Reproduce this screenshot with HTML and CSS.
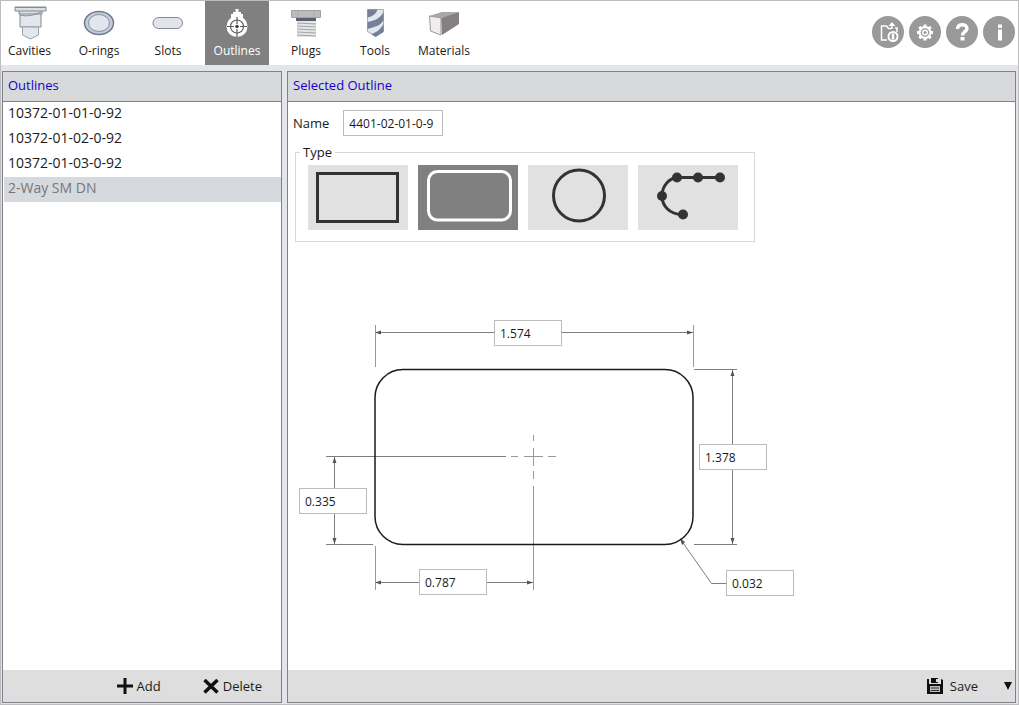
FILE: index.html
```
<!DOCTYPE html>
<html lang="en">
<head>
<meta charset="utf-8">
<title>Outlines</title>
<link rel="stylesheet" href="styles.css">
</head>
<body>
<div class="app">
  <header class="toolbar">
    <nav class="tabs" aria-label="Libraries">
      <button class="tab tab-first" type="button">
        <svg class="tab-icon" viewBox="0 0 36 36" aria-hidden="true"><path d="M8 7h21v15H8z" fill="#e3e7ec" stroke="#858a94"/><path d="M10.500 22h16v8l-8 4-8-4z" fill="#e3e7ec" stroke="#9a9fa8"/><path d="M3 2h31v4h-4v3H7V6H3z" fill="#dcdfe3" stroke="#858a94"/><path d="M3 2.500h31M7 6h23M8 10c7 2 14 0 21-3" fill="none" stroke="#858a94"/></svg>
        <span>Cavities</span>
      </button>
      <button class="tab" type="button">
        <svg class="tab-icon" viewBox="0 0 36 36" aria-hidden="true"><ellipse cx="18" cy="18" rx="14.500" ry="11.500" fill="#c3ccd8" stroke="#717b8b" stroke-width="1.500"/><ellipse cx="18" cy="18" rx="10.500" ry="8.500" fill="#e1e6ee" stroke="#8791a0"/></svg>
        <span>O-rings</span>
      </button>
      <button class="tab" type="button">
        <svg class="tab-icon" viewBox="0 0 36 36" aria-hidden="true"><rect x="3" y="12.500" width="29.500" height="11" rx="5.500" fill="#e1e4e9" stroke="#858a94"/></svg>
        <span>Slots</span>
      </button>
      <button class="tab tab-active" type="button" aria-current="page">
        <svg class="tab-icon" viewBox="0 0 36 36" aria-hidden="true"><path d="M14 11V7h2.500V4h3v3H22v4z" fill="#fff"/><path d="M12 9h12v5H12z" fill="#fff"/><circle cx="18" cy="21.500" r="10.500" fill="#fff"/><g fill="none" stroke="#5c5c5c" stroke-width="1.200"><circle cx="18" cy="21.500" r="6.500"/><path d="M18 12v7M18 24v8M8 21.500h7M21 21.500h7"/></g><circle cx="18" cy="21.500" r="1.800" fill="#444"/></svg>
        <span>Outlines</span>
      </button>
      <button class="tab" type="button">
        <svg class="tab-icon" viewBox="0 0 36 36" aria-hidden="true"><path d="M3.500 5.500h29v7h-29z" fill="#bcbcbe" stroke="#a2a2a5"/><path d="M10 6v6M26 6v6" stroke="#aaa"/><path d="M8 13h20v3H8z" fill="#59616e"/><path d="M9 16h19v16H9z" fill="#e6e6e8"/><path d="M9 18l19 1M9 21l19 1M9 24l19 1M9 27l19 1M9 30l19 1" stroke="#a3a5aa"/></svg>
        <span>Plugs</span>
      </button>
      <button class="tab" type="button">
        <svg class="tab-icon" viewBox="0 0 36 36" aria-hidden="true"><path d="M10.500 4.500h16v22l-8 5-8-5z" fill="#e1e7f0" stroke="#a3adba"/><path d="M10.500 4.500h10c-1 4-5 7-10 8zM26.500 7v8c-3 6-9 7-16 9v-7c7-1 13-4 16-10zM26.500 19v8l-8 5-4-3c6-2 9-5 12-10z" fill="#738095"/></svg>
        <span>Tools</span>
      </button>
      <button class="tab" type="button">
        <svg class="tab-icon" viewBox="0 0 36 36" aria-hidden="true"><path d="M3 11l13-4h17l-17 6z" fill="#aaa8a7"/><path d="M15 13l18-6v12L16 30z" fill="#858180"/><path d="M3.500 11l11.500 2v17L4.500 26z" fill="#eeeeef" stroke="#9a9897"/></svg>
        <span>Materials</span>
      </button>
    </nav>
    <div class="actions">
      <button class="round" type="button" aria-label="Export information"><svg viewBox="0 0 32 32" aria-hidden="true"><path d="M15 24H9.500V10h5l2 2.500h3M23 12h2v4" fill="none" stroke="#fff" stroke-width="1.500"/><path d="M20 6l3.500 4h-7z" fill="#fff"/><path d="M20 9v4" stroke="#fff" stroke-width="1.500"/><circle cx="21" cy="20.500" r="4.500" fill="#999" stroke="#fff" stroke-width="2"/><path d="M21 17.500v6" stroke="#fff" stroke-width="2.500"/></svg></button>
      <button class="round" type="button" aria-label="Settings"><svg viewBox="0 0 32 32" aria-hidden="true"><circle cx="16" cy="16.500" r="5.400" fill="none" stroke="#fff" stroke-width="2.200"/><circle cx="16" cy="16.500" r="2.300" fill="none" stroke="#fff" stroke-width="1.500"/><path d="M16 8.500v3M16 21.500v3M8 16.500h3M21 16.500h3M10.300 10.800l2.200 2.200M19.500 20l2.200 2.200M10.300 22.200l2.200-2.200M19.500 13l2.200-2.200" stroke="#fff" stroke-width="3"/></svg></button>
      <button class="round" type="button" aria-label="Help"><svg viewBox="0 0 32 32" aria-hidden="true"><path d="M11.500 13c0-6 9.500-5.500 9.500-.5 0 3-4.500 3.500-4.500 7" fill="none" stroke="#fff" stroke-width="3.500"/><path d="M14.500 21h4v3.500h-4z" fill="#fff"/></svg></button>
      <button class="round" type="button" aria-label="About"><svg viewBox="0 0 32 32" aria-hidden="true"><path d="M15 8.500h4V12h-4zM15 13.500h4v11h-4z" fill="#fff"/></svg></button>
    </div>
  </header>

  <main class="panels">
    <section class="panel panel-list">
      <h2 class="panel-title">Outlines</h2>
      <ul class="list">
        <li><button class="item" type="button">10372-01-01-0-92</button></li>
        <li><button class="item" type="button">10372-01-02-0-92</button></li>
        <li><button class="item" type="button">10372-01-03-0-92</button></li>
        <li><button class="item item-selected" type="button" aria-current="true">2-Way SM DN</button></li>
      </ul>
      <footer class="panel-footer list-footer">
        <button class="command" type="button"><svg class="command-icon" viewBox="0 0 16 16" aria-hidden="true"><path d="M8 0v16M0 8h16" stroke="#111" stroke-width="3"/></svg>Add</button>
        <button class="command" type="button"><svg class="command-icon" viewBox="0 0 16 16" aria-hidden="true"><path d="M1.500 2l13 12.500M14.500 2l-13 12.500" stroke="#111" stroke-width="3.500"/></svg>Delete</button>
      </footer>
    </section>

    <section class="panel panel-detail">
      <h2 class="panel-title">Selected Outline</h2>
      <form class="detail">
        <div class="name-row">
          <label for="name">Name</label>
          <input class="box name-box" id="name" type="text" value="4401-02-01-0-9">
        </div>
        <fieldset class="types">
          <legend>Type</legend>
          <label class="type"><input type="radio" name="type" aria-label="Rectangle"><svg viewBox="0 0 100 65" aria-hidden="true"><rect x="9.500" y="8.500" width="80" height="48" fill="none" stroke="currentColor" stroke-width="3"/></svg></label>
          <label class="type"><input type="radio" name="type" aria-label="Rounded rectangle" checked><svg viewBox="0 0 100 65" aria-hidden="true"><rect x="10.500" y="6.500" width="82" height="48.500" rx="9" fill="none" stroke="currentColor" stroke-width="3"/></svg></label>
          <label class="type"><input type="radio" name="type" aria-label="Circle"><svg viewBox="0 0 100 65" aria-hidden="true"><circle cx="51" cy="30.500" r="25.500" fill="none" stroke="currentColor" stroke-width="3"/></svg></label>
          <label class="type"><input type="radio" name="type" aria-label="Free form"><svg viewBox="0 0 100 65" aria-hidden="true"><path d="M82 12.500H40C30 13 24 22 24 31s7 19 21 18.500" fill="none" stroke="currentColor" stroke-width="3"/><g fill="currentColor"><circle cx="39" cy="12.500" r="5"/><circle cx="60" cy="12.500" r="5"/><circle cx="82" cy="12.500" r="5"/><circle cx="24" cy="31" r="5"/><circle cx="45" cy="49.500" r="5"/></g></svg></label>
        </fieldset>
        <div class="drawing">
          <svg class="drawing-lines" viewBox="298 310 500 290" aria-hidden="true">
            <g fill="none" stroke="#7d7d7d">
              <path d="M376 332.500h317M732.500 370v174M334.500 457v87M376 582.500h157"/>
              <path d="M694 369.500h43M694 544.500h43M326 456.500h180M326 544.500h47"/>
              <path stroke="#999" d="M375.500 325v42M693.500 325v42M375.500 546v44M533.500 486v104"/>
              <path d="M681 540l30.500 43.500H727"/>
              <path stroke="#999" d="M511 456.500h7M524 456.500h19M548 456.500h8M533.500 435v6M533.500 448v18M533.500 471v8"/>
            </g>
            <path fill="#555" d="M375 332.500l6-2v4zM693 332.500l-6-2v4zM732.500 370l-2 6h4zM732.500 544l-2-6h4zM334.500 457l-2 6h4zM334.500 544l-2-6h4zM375 582.500l6-2v4zM533 582.500l-6-2v4zM680 538l2 7 3-3z"/>
            <rect x="375" y="369.500" width="318" height="175" rx="28" fill="none" stroke="#1a1a1a" stroke-width="1.500"/>
          </svg>
          <input class="box size width" type="text" value="1.574" aria-label="Width">
          <input class="box size height" type="text" value="1.378" aria-label="Height">
          <input class="box size center-y" type="text" value="0.335" aria-label="Center from bottom">
          <input class="box size center-x" type="text" value="0.787" aria-label="Center from left">
          <input class="box size radius" type="text" value="0.032" aria-label="Corner radius">
        </div>
      </form>
      <footer class="panel-footer detail-footer">
        <button class="command" type="button"><svg class="command-icon save-icon" viewBox="0 0 16 16" aria-hidden="true"><path d="M0 1h2v5h12V1l2 1v14H0z" fill="#111"/><path d="M4 0h7v5H4z" fill="#111"/><path d="M9 1h2v3H9z" fill="#ddd"/><path d="M3 8h10v6H3z" fill="#bbb"/><path d="M4 10h8M4 12.500h8" stroke="#333"/></svg>Save</button>
        <button class="more" type="button" aria-label="More save options"><svg viewBox="0 0 8 8" aria-hidden="true"><path d="M0 0h8L4 8z" fill="#111"/></svg></button>
      </footer>
    </section>
  </main>
</div>
</body>
</html>
```
FILE: styles.css
```
* { box-sizing: border-box; }

body {
  margin: 0;
  font-family: "Open Sans", "Noto Sans", sans-serif;
  font-size: 13px;
  color: #1a1a1a;
}

button, input {
  font: inherit;
  color: inherit;
}

button {
  padding: 0;
  border: 0;
  background: none;
}

.app {
  display: flex;
  flex-direction: column;
  min-height: 100vh;
  border: 1px solid #bdbdbf;
  background: #e4e5eb;
}

.toolbar {
  display: flex;
  justify-content: space-between;
  align-items: center;
  background: #fff;
}

.tabs {
  display: flex;
  gap: 5px;
}

.tab {
  display: flex;
  flex-direction: column;
  align-items: center;
  gap: 1px;
  width: 64px;
  height: 64px;
  padding-top: 4px;
  font-size: 12px;
  line-height: 18px;
}

.tab-first {
  width: 61px;
  padding-right: 4px;
}

.tab-active {
  background: #808080;
  color: #fff;
}

.tab-icon {
  width: 36px;
  height: 36px;
}

.actions {
  display: flex;
  gap: 5px;
  padding: 0 3px 2px 0;
}

.round {
  width: 32px;
  height: 32px;
  border-radius: 50%;
  background: #999;
}

.round svg {
  display: block;
}

.panels {
  display: flex;
  flex: 1;
  gap: 5px;
  padding: 6px 2px 1px 1px;
}

.panel {
  display: flex;
  flex-direction: column;
  border: 1px solid #80808a;
  background: #fff;
}

.panel-list { width: 280px; }

.panel-detail { flex: 1; }

.panel-title {
  margin: 0;
  padding: 0 5px 3px;
  border-bottom: 1px solid #80808a;
  background: #d8d9db;
  color: #1400d2;
  font-size: 13px;
  font-weight: 400;
  line-height: 26px;
}

.list {
  flex: 1;
  margin: 0;
  padding: 0 0 0 1px;
  list-style: none;
}

.item {
  display: block;
  width: 100%;
  padding: 0 4px 3px;
  font-size: 14px;
  line-height: 22px;
  text-align: left;
}

.item-selected {
  background: #d6d9de;
  color: #777;
}

.panel-footer {
  display: flex;
  align-items: center;
  justify-content: flex-end;
  height: 32px;
  background: #dedede;
}

.list-footer {
  gap: 42px;
  padding-right: 19px;
}

.detail-footer {
  gap: 26px;
  padding-right: 3px;
}

.command {
  display: flex;
  align-items: center;
  gap: 4px;
}

.command-icon {
  width: 16px;
  height: 16px;
}

.save-icon { margin-right: 3px; }

.more svg {
  display: block;
  width: 8px;
  height: 8px;
}

.detail {
  flex: 1;
  padding: 8px 5px;
}

.name-row {
  display: flex;
  align-items: center;
  gap: 14px;
}

.box {
  height: 26px;
  padding: 0 5px;
  border: 1px solid #bcbcbc;
  background: #fff;
  font-size: 12px;
}

.name-box { width: 100px; }

.types {
  display: flex;
  gap: 10px;
  width: fit-content;
  margin: 6px 0 0 2px;
  padding: 3px 16px 11px 12px;
  border: 1px solid #d8d8d8;
}

.types legend {
  margin-left: -8px;
  padding: 0 3px;
  line-height: 20px;
}

.type {
  display: block;
  width: 100px;
  height: 65px;
  background: #e1e1e1;
  color: #333;
}

.type svg { display: block; }

.type:has(:checked) {
  background: #808080;
  color: #fff;
}

.type input {
  position: absolute;
  opacity: 0;
}

.drawing {
  position: relative;
  width: 500px;
  height: 290px;
  margin: 68px 0 0 5px;
}

.drawing-lines {
  display: block;
  width: 100%;
  height: 100%;
}

.size {
  position: absolute;
  width: 68px;
}

.width { left: 196px; top: 10px; }
.height { left: 401px; top: 134px; }
.center-y { left: 1px; top: 178px; }
.center-x { left: 121px; top: 259px; }
.radius { left: 428px; top: 260px; }
```
